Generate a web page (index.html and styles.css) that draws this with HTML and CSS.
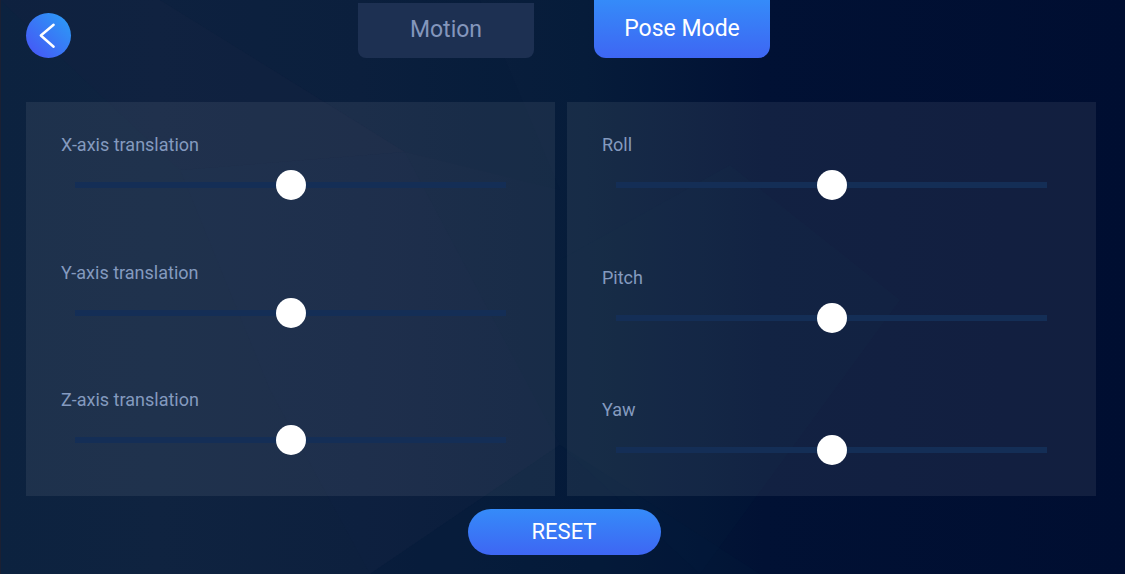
FILE: index.html
```html
<!DOCTYPE html>
<html lang="en">
<head>
<meta charset="utf-8">
<meta name="viewport" content="width=device-width, initial-scale=1">
<title>Pose Mode</title>
<link rel="stylesheet" href="styles.css">
</head>
<body>
<svg class="backdrop" viewBox="0 0 1125 574" preserveAspectRatio="none" aria-hidden="true">
  <polygon points="160,0 480,0 560,190 405,152" fill="#00183c" opacity=".12"/>
  <polygon points="0,0 160,0 405,152 180,170" fill="#1a2440" opacity=".15"/>
  <polygon points="180,170 405,152 560,445 370,574 270,390" fill="#16264a" opacity=".08"/>
  <polygon points="560,445 370,574 760,574" fill="#02183a" opacity=".4"/>
  <polygon points="560,260 730,165 900,300 700,574 560,445" fill="#0a2142" opacity=".14"/>
</svg>
<div class="page">
  <header class="topbar">
    <button class="back" type="button" aria-label="Back">
      <svg viewBox="0 0 44 44" aria-hidden="true"><path d="M27 11.500 L14.500 22 L27 33" fill="none" stroke="#fff" stroke-width="2.400" stroke-linecap="round" stroke-linejoin="round"/></svg>
    </button>
    <nav class="tabs">
      <button class="tab" type="button">Motion</button>
      <button class="tab tab-active" type="button" aria-current="page">Pose Mode</button>
    </nav>
  </header>
  <main class="panels">
    <section class="panel panel-translation">
      <div class="control"><label for="x">X-axis translation</label><input id="x" type="range"></div>
      <div class="control"><label for="y">Y-axis translation</label><input id="y" type="range"></div>
      <div class="control"><label for="z">Z-axis translation</label><input id="z" type="range"></div>
    </section>
    <section class="panel panel-rotation">
      <div class="control"><label for="roll">Roll</label><input id="roll" type="range"></div>
      <div class="control"><label for="pitch">Pitch</label><input id="pitch" type="range"></div>
      <div class="control"><label for="yaw">Yaw</label><input id="yaw" type="range"></div>
    </section>
  </main>
  <footer class="actions">
    <button class="reset" type="button">RESET</button>
  </footer>
</div>
</body>
</html>
```
FILE: styles.css
```css
* {
  box-sizing: border-box;
}

body {
  margin: 0;
  position: relative;
  font-family: Roboto, "Liberation Sans", sans-serif;
  background: linear-gradient(90deg, #0c223f 0%, #0f2340 14%, #0d203e 32%, #061c3a 52%, #011134 68%, #000e31 100%);
}

button {
  border: 0;
  padding: 0;
  font-family: inherit;
  cursor: pointer;
}

.backdrop {
  position: absolute;
  inset: 0;
  width: 100%;
  height: 100%;
}

.page {
  position: relative;
  display: flex;
  flex-direction: column;
  min-height: 100vh;
  padding-bottom: 19px;
  border-left: 1px solid #1b2033;
}

.topbar {
  display: grid;
  grid-template-columns: 1fr auto 1fr;
  align-items: start;
  padding: 0 23px 0 25px;
}

.back {
  width: 45px;
  height: 45px;
  margin-top: 13px;
  border-radius: 50%;
  background: linear-gradient(45deg, #4657f5 8%, #2c9af6 92%);
}

.back svg {
  display: block;
  width: 100%;
  height: 100%;
}

.tabs {
  display: flex;
  align-items: flex-end;
  gap: 60px;
}

.tab {
  width: 176px;
  height: 55px;
  padding-bottom: 2px;
  border-radius: 0 0 8px 8px;
  background: #1d3052;
  color: #8496bc;
  font-size: 23px;
  line-height: 28px;
}

.tab-active {
  height: 58px;
  padding-bottom: 0;
  border-radius: 0 0 12px 12px;
  background: linear-gradient(#358bf9, #3e66f3);
  color: #fff;
}

.panels {
  flex: 1;
  display: grid;
  grid-template-columns: 1fr 1fr;
  gap: 12px;
  margin: 44px 29px 13px 25px;
}

.panel {
  display: flex;
  flex-direction: column;
  justify-content: space-between;
  gap: 24px;
  padding: 31px 35px 41px;
  background: rgba(255, 255, 255, 0.07);
}

.panel-rotation {
  padding-bottom: 31px;
}

.control {
  display: flex;
  flex-direction: column;
  gap: 13px;
}

.control label {
  color: #849abf;
  font-size: 18px;
  line-height: 24px;
}

.control input {
  appearance: none;
  height: 30px;
  margin: 0 14px;
  background: transparent;
}

.control input::-webkit-slider-runnable-track {
  height: 6px;
  background: #142e56;
}

.control input::-webkit-slider-thumb {
  appearance: none;
  width: 30px;
  height: 30px;
  margin-top: -12px;
  border-radius: 50%;
  background: #fff;
}

.actions {
  display: flex;
  justify-content: center;
  padding: 0 23px 0 25px;
}

.reset {
  width: 193px;
  height: 46px;
  border-radius: 23px;
  background: linear-gradient(#358bf9, #3e66f3);
  color: #fff;
  font-size: 22px;
  line-height: 28px;
}
```
